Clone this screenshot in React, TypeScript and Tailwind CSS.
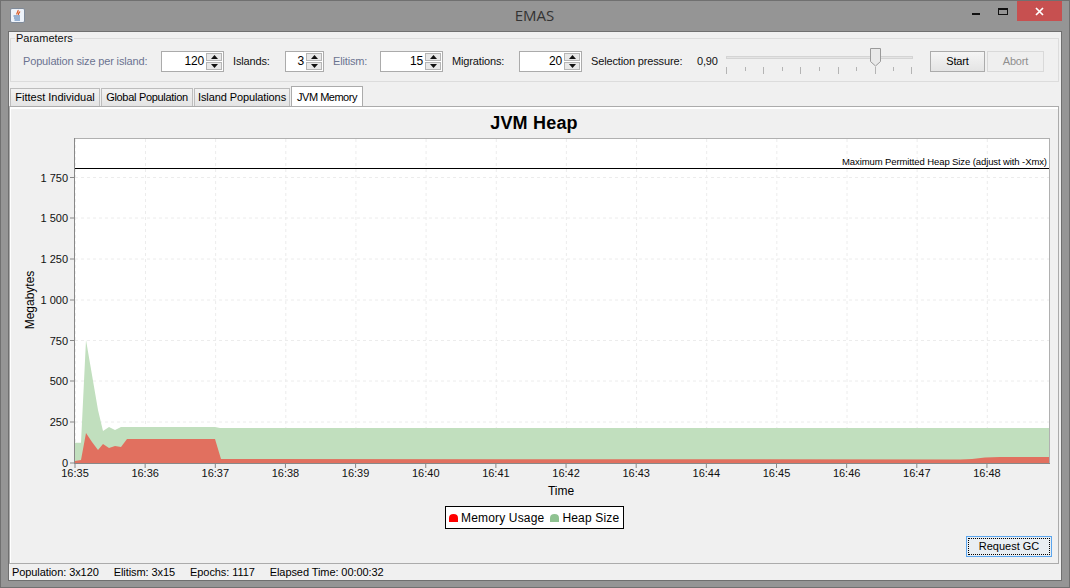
const ui = "font-['Liberation_Sans',sans-serif] text-[11px] leading-none";

const minutes = ["16:35", "16:36", "16:37", "16:38", "16:39", "16:40", "16:41", "16:42", "16:43", "16:44", "16:45", "16:46", "16:47", "16:48"];
const yTicks = [
  { label: "0", y: 463 },
  { label: "250", y: 422 },
  { label: "500", y: 381 },
  { label: "750", y: 340.5 },
  { label: "1 000", y: 300 },
  { label: "1 250", y: 259 },
  { label: "1 500", y: 218 },
  { label: "1 750", y: 177.5 },
];

const heapPoints =
  "75,463 75,442.7 81,442.7 86,340 92,375 98,410 103,431 109,427 115,430 121,427 215,427 220,428 1049,428 1049,463";
const usagePoints =
  "75,463 75,461 81,460 86,433 92,442 98,450 103,444 109,448 115,446 121,447 127,439 215,439 221,459 960,459.5 972,459 985,457.5 1000,457 1049,457 1049,463";

const Spinner = ({ value, width }: { value: number; width: string }) => (
  <div className={`flex h-[21px] items-center border border-[#ababab] bg-white ${width}`}>
    <span className="flex-1 pr-[2px] text-right text-[12px] text-black">{value}</span>
    <div className="mr-[1px] flex h-[17px] w-[16px] flex-col gap-[1px]">
      <div className="flex h-[8px] items-center justify-center border border-[#b5b5b5] bg-[#e8e8e8]">
        <svg width="7" height="4" viewBox="0 0 7 4"><path d="M3.5 0 7 4H0z" fill="#111" /></svg>
      </div>
      <div className="flex h-[8px] items-center justify-center border border-[#b5b5b5] bg-[#e8e8e8]">
        <svg width="7" height="4" viewBox="0 0 7 4"><path d="M0 0h7L3.5 4z" fill="#111" /></svg>
      </div>
    </div>
  </div>
);

const Tab = ({ label, width, active, track }: { label: string; width: string; active?: boolean; track: string }) => (
  <div
    className={
      active
        ? `-mb-[1px] flex h-[21px] items-center justify-center border border-b-0 border-[#ababab] bg-white text-black ${width} ${track}`
        : `flex h-[18px] items-center justify-center border border-b-0 border-[#bdbdbd] bg-gradient-to-b from-[#f2f2f2] to-[#e4e4e4] text-black ${width} ${track}`
    }
  >
    {label}
  </div>
);

const Slider = () => (
  <svg width="190" height="28" viewBox="724 48 190 28" className="ml-[5px]">
    <rect x="726.5" y="57.5" width="186" height="2" fill="#e4e4e4" stroke="#d4d4d4" />
    {[726, 763, 800, 838, 875, 911].map((x) => (
      <line key={x} x1={x + 0.5} x2={x + 0.5} y1="68" y2="75" stroke="#b4b4b4" />
    ))}
    {[745, 782, 819, 856, 893].map((x) => (
      <line key={x} x1={x + 0.5} x2={x + 0.5} y1="68" y2="72" stroke="#b4b4b4" />
    ))}
    <path d="M870.5 49.5h10v13l-5 4.500-5-4.500z" fill="#e9e9e9" stroke="#9a9a9a" />
  </svg>
);

const Chart = () => (
  <svg width="1048" height="369" viewBox="10 133 1048 369" className="block font-['Liberation_Sans',sans-serif]">
    <rect x="74.500" y="138.500" width="975" height="325" fill="#fff" stroke="#b0b0b0" />
    {yTicks.slice(1).map((t) => (
      <line key={t.label} x1="75" x2="1049" y1={t.y} y2={t.y} stroke="#ececec" strokeDasharray="3 3" />
    ))}
    {minutes.map((m, i) => (
      <line key={m} x1={145.500 + (i - 1) * 70.15} x2={145.500 + (i - 1) * 70.15} y1="139" y2="463" stroke="#ececec" strokeDasharray="3 3" />
    ))}
    <polygon points={heapPoints} fill="#c1dfbe" />
    <polygon points={usagePoints} fill="#e1705f" />
    <line x1="75" x2="1049" y1="168.500" y2="168.500" stroke="#000" />
    <text x="1047" y="165" textAnchor="end" fontSize="9.500" textLength="205" fill="#000">
      Maximum Permitted Heap Size (adjust with -Xmx)
    </text>
    <line x1="74.500" x2="74.500" y1="138" y2="464" stroke="#888" />
    <line x1="74" x2="1050" y1="463.500" y2="463.500" stroke="#888" />
    {yTicks.map((t) => (
      <g key={t.label}>
        <line x1="70" x2="74" y1={t.y} y2={t.y} stroke="#888" />
        <text x="68" y={t.y + 4} textAnchor="end" fontSize="11" fill="#111">{t.label}</text>
      </g>
    ))}
    {minutes.map((m, i) => {
      const x = 75 + i * 70.15;
      return (
        <g key={m}>
          <line x1={x} x2={x} y1="464" y2="468" stroke="#888" />
          <text x={x} y="477" textAnchor="middle" fontSize="11" fill="#111">{m}</text>
        </g>
      );
    })}
    <text x="561" y="495" textAnchor="middle" fontSize="12" fill="#000">Time</text>
    <text transform="translate(34 300) rotate(-90)" textAnchor="middle" fontSize="12" fill="#000">Megabytes</text>
  </svg>
);

const App = () => {
  return (
    <div className={`flex h-[588px] w-[1070px] flex-col overflow-hidden border border-[#707070] bg-[#959595] px-[7px] pb-[6px] ${ui}`}>
      {/* title bar */}
      <div className="flex h-[30px] shrink-0 items-start">
        <div className="mt-[7px] ml-[2px] flex h-[15px] w-[15px] items-center justify-center rounded-[2px] border border-[#7f8a99] bg-[#eef3fa]">
          <svg width="13" height="13" viewBox="0 0 13 13">
            <path d="M7 1c1 1.500-2 2.500-1 4.500M9 2.500C8 4 7 4.500 7.500 6" fill="none" stroke="#d9541e" strokeWidth="1.200" />
            <path d="M2.500 7h6.500M3 9h6M3.500 11h5.500" stroke="#3f6fa8" strokeWidth="1" />
          </svg>
        </div>
        <div className="flex-1 pt-[7px] pl-[72px] text-center font-['Open_Sans',sans-serif] text-[15px] text-[#333]">EMAS</div>
        <div className="flex h-[20px] items-start">
          <div className="mt-[12px] h-[2px] w-[8px] bg-[#111]" />
          <div className="mt-[7px] ml-[18px] h-[7px] w-[10px] border border-t-2 border-[#111]" />
          <div className="ml-[9px] flex h-[20px] w-[45px] items-center justify-center bg-[#c75050]">
            <svg width="9" height="9" viewBox="0 0 9 9"><path d="M1 1l7 7M8 1 1 8" stroke="#fff" strokeWidth="1.700" /></svg>
          </div>
        </div>
      </div>

      {/* window content */}
      <div className="flex min-h-0 flex-1 flex-col border border-[#6f6f6f] bg-[#f0f0f0]">
        <fieldset className="mr-[2px] ml-[1px] h-[50px] shrink-0 border border-[#dcdcdc] pl-[12px]">
          <legend className="-ml-[8px] px-[1px] leading-[13px] text-[#111]">Parameters</legend>
          <div className="mt-[2px] flex items-center tracking-[-0.15px] text-[#111]">
            <span className="w-[138px] text-[#6b7390]">Population size per island:</span>
            <Spinner value={120} width="w-[63px]" />
            <span className="ml-[9px] w-[52px]">Islands:</span>
            <Spinner value={3} width="w-[39px]" />
            <span className="ml-[9px] w-[47px] text-[#6b7390]">Elitism:</span>
            <Spinner value={15} width="w-[63px]" />
            <span className="ml-[9px] w-[67px]">Migrations:</span>
            <Spinner value={20} width="w-[63px]" />
            <span className="ml-[9px] w-[106px]">Selection pressure:</span>
            <span className="w-[22px]">0,90</span>
            <Slider />
            <button className="ml-[16px] h-[21px] w-[55px] border border-[#ababab] bg-gradient-to-b from-[#f5f5f5] to-[#e4e4e4] text-black">Start</button>
            <button className="ml-[2px] h-[21px] w-[57px] border border-[#d9d9d9] bg-[#efefef] text-[#8f8f8f]">Abort</button>
          </div>
        </fieldset>

        <div className="mt-[4px] ml-[1px] flex items-end gap-[1px]">
          <Tab label="Fittest Individual" width="w-[90px]" track="tracking-normal" />
          <Tab label="Global Population" width="w-[92px]" track="tracking-[-0.3px]" />
          <Tab label="Island Populations" width="w-[96px]" track="tracking-[-0.1px]" />
          <Tab label="JVM Memory" width="w-[72px]" track="tracking-[-0.5px]" active />
        </div>

        {/* tab body */}
        <div className="mr-[2px] flex min-h-0 flex-1 flex-col border border-[#ababab] bg-[#f0f0f0] shadow-[inset_1px_2px_0_#fff]">
          <div className="pt-[6px] text-center text-[18px] leading-[20px] font-bold tracking-[0.2px] text-black">JVM Heap</div>
          <Chart />
          <div className="mt-[4px] ml-[435px] flex h-[23px] w-[179px] items-center border border-black bg-white pl-[3px] text-[12px] tracking-[0.17px] text-black">
            <svg width="9" height="8" viewBox="0 0 9 8" className="mr-[3px]"><path d="M0 8V4q0-4 4.500-4T9 4v4z" fill="#f00" /></svg>
            <span>Memory Usage</span>
            <svg width="9" height="8" viewBox="0 0 9 8" className="mr-[3px] ml-[6px]"><path d="M0 8V4q0-4 4.500-4T9 4v4z" fill="#8fc291" /></svg>
            <span>Heap Size</span>
          </div>
          <div className="mt-[7px] flex justify-end pr-[6px]">
            <button className="h-[21px] w-[86px] border border-[#5aa5ee] bg-[#e9eef2] p-[1px] text-black">
              <span className="flex h-full w-full items-center justify-center border border-dotted border-black">Request GC</span>
            </button>
          </div>
        </div>

        <div className="flex h-[16px] shrink-0 items-center gap-[15px] pt-[1px] pl-[3px] tracking-[-0.08px] text-black">
          <span>Population: 3x120</span>
          <span>Elitism: 3x15</span>
          <span>Epochs: 1117</span>
          <span>Elapsed Time: 00:00:32</span>
        </div>
      </div>
    </div>
  );
};

export default App;
